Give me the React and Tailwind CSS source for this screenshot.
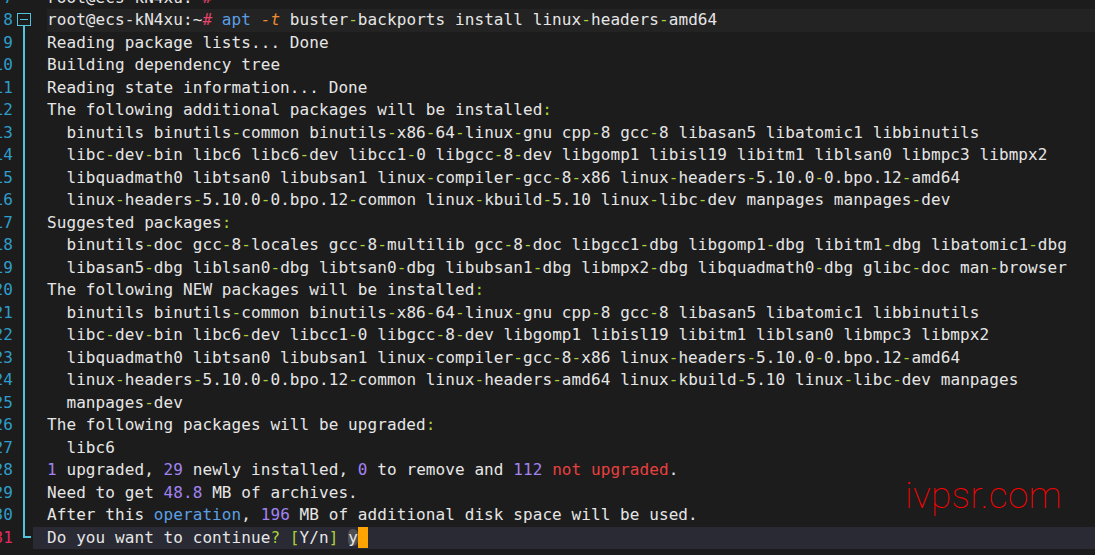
import React from 'react';

const W = 'text-[#e6e6e6]';
const LIME = 'text-[#a9d13c]';
const PINK = 'text-[#e5436b]';
const BLUE = 'text-[#5b9fe6]';
const ORANGE = 'text-[#ee8d30] italic';
const PURPLE = 'text-[#a283f2]';
const RED = 'text-[#e8403f]';

const pkgA = '  binutils binutils-common binutils-x86-64-linux-gnu cpp-8 gcc-8 libasan5 libatomic1 libbinutils';
const pkgC = '  libquadmath0 libtsan0 libubsan1 linux-compiler-gcc-8-x86 linux-headers-5.10.0-0.bpo.12-amd64';

const lines = [
  { n: 7, segs: [['root@ecs-kN4xu:~', W], ['#', PINK]] },
  {
    n: 8,
    segs: [
      ['root@ecs-kN4xu:~', W],
      ['#', PINK],
      ' ',
      ['apt', BLUE],
      ' ',
      ['-t', ORANGE],
      ' buster-backports install linux-headers-amd64',
    ],
  },
  { n: 9, segs: ['Reading package lists... Done'] },
  { n: 10, segs: ['Building dependency tree'] },
  { n: 11, segs: ['Reading state information... Done'] },
  { n: 12, segs: ['The following additional packages will be installed:'] },
  { n: 13, segs: [pkgA] },
  { n: 14, segs: ['  libc-dev-bin libc6 libc6-dev libcc1-0 libgcc-8-dev libgomp1 libisl19 libitm1 liblsan0 libmpc3 libmpx2'] },
  { n: 15, segs: [pkgC] },
  { n: 16, segs: ['  linux-headers-5.10.0-0.bpo.12-common linux-kbuild-5.10 linux-libc-dev manpages manpages-dev'] },
  { n: 17, segs: ['Suggested packages:'] },
  { n: 18, segs: ['  binutils-doc gcc-8-locales gcc-8-multilib gcc-8-doc libgcc1-dbg libgomp1-dbg libitm1-dbg libatomic1-dbg'] },
  { n: 19, segs: ['  libasan5-dbg liblsan0-dbg libtsan0-dbg libubsan1-dbg libmpx2-dbg libquadmath0-dbg glibc-doc man-browser'] },
  { n: 20, segs: ['The following NEW packages will be installed:'] },
  { n: 21, segs: [pkgA] },
  { n: 22, segs: ['  libc-dev-bin libc6-dev libcc1-0 libgcc-8-dev libgomp1 libisl19 libitm1 liblsan0 libmpc3 libmpx2'] },
  { n: 23, segs: [pkgC] },
  { n: 24, segs: ['  linux-headers-5.10.0-0.bpo.12-common linux-headers-amd64 linux-kbuild-5.10 linux-libc-dev manpages'] },
  { n: 25, segs: ['  manpages-dev'] },
  { n: 26, segs: ['The following packages will be upgraded:'] },
  { n: 27, segs: ['  libc6'] },
  {
    n: 28,
    segs: [
      ['1', PURPLE],
      ' upgraded, ',
      ['29', PURPLE],
      ' newly installed, ',
      ['0', PURPLE],
      ' to remove and ',
      ['112', PURPLE],
      ' ',
      ['not upgraded', RED],
      '.',
    ],
  },
  { n: 29, segs: ['Need to get ', ['48.8', PURPLE], ' MB of archives.'] },
  {
    n: 30,
    segs: ['After this ', ['operation', BLUE], ', ', ['196', PURPLE], ' MB of additional disk space will be used.'],
  },
  {
    n: 31,
    segs: ['Do you want to continue', ['?', LIME], ' ', ['[', LIME], 'Y/n', [']', LIME], ' '],
    prompt: true,
  },
];

// hyphens and colons come out lime in this colour scheme
function Plain({ text }) {
  const parts = text.split(/([-:])/);
  return parts.map((p, i) =>
    p === '-' || p === ':' ? (
      <span key={i} className={LIME}>{p}</span>
    ) : (
      <span key={i} className={W}>{p}</span>
    )
  );
}

function Segs({ segs }) {
  return segs.map((s, i) =>
    typeof s === 'string' ? (
      <Plain key={i} text={s} />
    ) : (
      <span key={i} className={s[1]}>{s[0]}</span>
    )
  );
}

function Fold({ n }) {
  if (n === 8) {
    return (
      <div className="flex flex-col h-full">
        <div className="mt-[4px] ml-[4px] w-[14px] h-[13px] border-[1.5px] border-[#52c3dd] flex items-center justify-center shrink-0">
          <div className="w-[8px] h-[1.5px] bg-[#52c3dd]" />
        </div>
        <div className="ml-[10px] w-[2px] flex-1 bg-[#52c3dd]" />
      </div>
    );
  }
  if (n === 31) {
    return <div className="ml-[10px] w-[8px] h-[11.5px] border-l-2 border-b-2 border-[#52c3dd]" />;
  }
  if (n > 8) return <div className="ml-[10px] w-[2px] h-full bg-[#52c3dd]" />;
  return null;
}

function Row({ line }) {
  const { n, segs, prompt } = line;
  return (
    <div className="flex h-[22.5px] leading-[22.5px]">
      <div
        className={`w-[13px] shrink-0 flex justify-end whitespace-pre ${n === 31 ? 'text-[#e42a63]' : 'text-[#2f9ccb]'}`}
      >
        {n}
      </div>
      <div className="w-[20px] shrink-0 h-full">
        <Fold n={n} />
      </div>
      <div className={`flex-1 flex h-full ${prompt ? 'bg-[#292a33]' : ''}`}>
        <div className="w-[14px] shrink-0" />
        <div className={`flex-1 whitespace-pre flex items-center ${n === 8 ? 'bg-[#232323]' : ''}`}>
          <span>
            <Segs segs={segs} />
          </span>
          {prompt && (
            <>
              <span className="rounded-[5px] bg-[#505050] text-[#e6e6e6] leading-[17px]">y</span>
              <span className="inline-block w-[10px] h-[21px] bg-[#ffa400]" />
            </>
          )}
        </div>
      </div>
    </div>
  );
}

export default function App() {
  return (
    <div
      className="relative w-[1095px] h-[555px] overflow-hidden bg-[#1c1c1c] text-[16px] tracking-[0.08px]"
      style={{ fontFamily: '"DejaVu Sans Mono", "Liberation Mono", monospace' }}
    >
      <div className="mt-[-13.5px] flex flex-col">
        {lines.map((l) => (
          <Row key={l.n} line={l} />
        ))}
      </div>
      <div
        className="absolute left-[905px] top-[477px] text-[37px] font-thin text-[#ff0000] tracking-[0.3px] leading-none"
        style={{ fontFamily: 'Roboto, "Noto Sans", sans-serif' }}
      >
        ivpsr.com
      </div>
    </div>
  );
}
